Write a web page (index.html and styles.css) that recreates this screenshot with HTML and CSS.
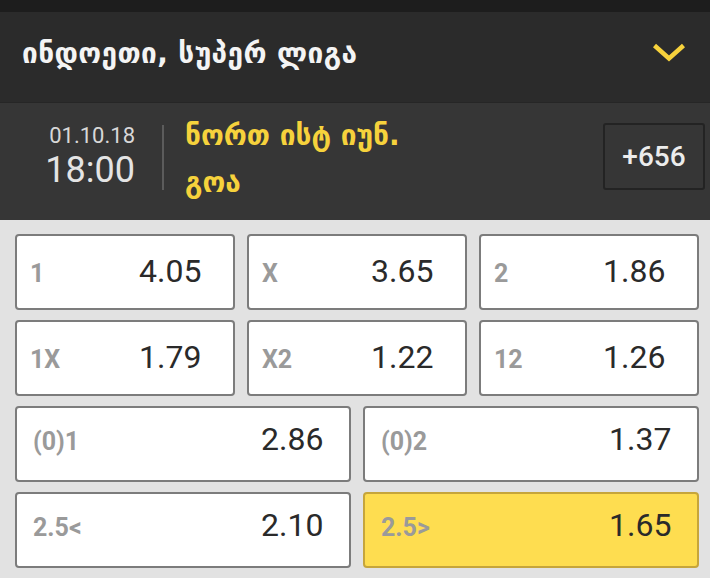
FILE: index.html
```html
<!DOCTYPE html>
<html lang="ka">
<head>
    <meta charset="UTF-8">
    <meta name="viewport" content="width=device-width, initial-scale=1.0">
    <title>ინდოეთი, სუპერ ლიგა</title>
    <link rel="stylesheet" href="styles.css">
</head>
<body>

<div class="topbar"></div>

<div class="league">
    <h1 class="league-title">ინდოეთი, სუპერ ლიგა</h1>
    <svg class="chevron" width="34" height="19" viewBox="0 0 34 19">
        <polyline points="2.5,2.5 17,15.5 31.5,2.5" fill="none" stroke="#f7d23c" stroke-width="4.5" stroke-linejoin="miter"/>
    </svg>
</div>

<div class="match">
    <div class="when">
        <div class="date">01.10.18</div>
        <div class="time">18:00</div>
    </div>
    <div class="divider"></div>
    <div class="teams">
        <div>ნორთ ისტ იუნ.</div>
        <div>გოა</div>
    </div>
    <div class="more">+656</div>
</div>

<div class="odds">
    <div class="odd third"><span class="label">1</span><span class="value">4.05</span></div>
    <div class="odd third"><span class="label">X</span><span class="value">3.65</span></div>
    <div class="odd third"><span class="label">2</span><span class="value">1.86</span></div>

    <div class="odd third"><span class="label">1X</span><span class="value">1.79</span></div>
    <div class="odd third"><span class="label">X2</span><span class="value">1.22</span></div>
    <div class="odd third"><span class="label">12</span><span class="value">1.26</span></div>

    <div class="odd half"><span class="label">(0)1</span><span class="value">2.86</span></div>
    <div class="odd half"><span class="label">(0)2</span><span class="value">1.37</span></div>

    <div class="odd half"><span class="label">2.5&lt;</span><span class="value">2.10</span></div>
    <div class="odd half selected"><span class="label">2.5&gt;</span><span class="value">1.65</span></div>

    <!-- next row, only its top edge is on screen -->
    <div class="odd half"></div>
    <div class="odd half"></div>
</div>

</body>
</html>
```

FILE: styles.css
```css
body {
    margin: 0;
    padding: 0;
    width: 710px;
    height: 578px;
    overflow: hidden;
    background-color: #e2e2e2;
    font-family: Roboto, "DejaVu Sans", sans-serif;
}
.topbar {
    height: 12px;
    background-color: #1d1d1d;
}
.league {
    height: 90px;
    background-color: #2b2b2b;
    display: flex;
    align-items: center;
    justify-content: space-between;
    padding: 0 24px 0 22px;
    border-bottom: 1px solid #262626;
}
.league-title {
    margin: 0 0 8px 0;
    color: #f4f4f4;
    font-family: "DejaVu Sans", sans-serif;
    font-weight: bold;
    font-size: 28px;
    letter-spacing: 0.4px;
}
.chevron {
    display: block;
    margin-top: -9px;
}
.match {
    height: 117px;
    box-sizing: border-box;
    background-color: #363636;
    display: flex;
    align-items: flex-start;
    padding-top: 21px;
}
.when {
    width: 120px;
    margin-left: 15px;
    text-align: right;
    color: #e4e4e4;
}
.date {
    font-size: 22px;
    line-height: 24px;
    color: #d8d8d8;
}
.time {
    margin-top: 2px;
    font-size: 36px;
    line-height: 40px;
}
.divider {
    width: 2px;
    height: 65px;
    margin: 1px 0 0 27px;
    background-color: #5c5c5c;
}
.teams {
    flex: 1;
    margin: -12px 0 0 21px;
    color: #f6d23c;
    font-family: "DejaVu Sans", sans-serif;
    font-weight: bold;
    font-size: 28px;
    line-height: 47px;
}
.more {
    width: 102px;
    height: 67px;
    box-sizing: border-box;
    margin: -1px 5px 0 0;
    border: 2px solid #232323;
    border-radius: 3px;
    display: flex;
    align-items: center;
    justify-content: center;
    color: #ececec;
    font-size: 28px;
    font-weight: 500;
}
.odds {
    display: grid;
    grid-template-columns: repeat(6, 1fr);
    grid-auto-rows: 76px;
    gap: 10px 12px;
    width: 684px;
    padding: 14px 11px 0 15px;
}
.odd {
    box-sizing: border-box;
    background-color: #fff;
    border: 2px solid #7c7c7c;
    border-radius: 4px;
    display: flex;
    align-items: baseline;
    padding: 0 28px 0 15px;
    color: #2a2a2a;
}
.odd.third {
    grid-column: span 2;
    padding: 16px 28px 0 13px;
}
.odd.half {
    grid-column: span 3;
    padding: 12px 22px 0 16px;
}
.odd.selected {
    background-color: #fedd50;
    border-color: #c6a53b;
}
.label {
    flex: 1;
    color: #9a9a9a;
    font-size: 25px;
    font-weight: bold;
}
.value {
    width: 66px;
    font-size: 32px;
}
```
